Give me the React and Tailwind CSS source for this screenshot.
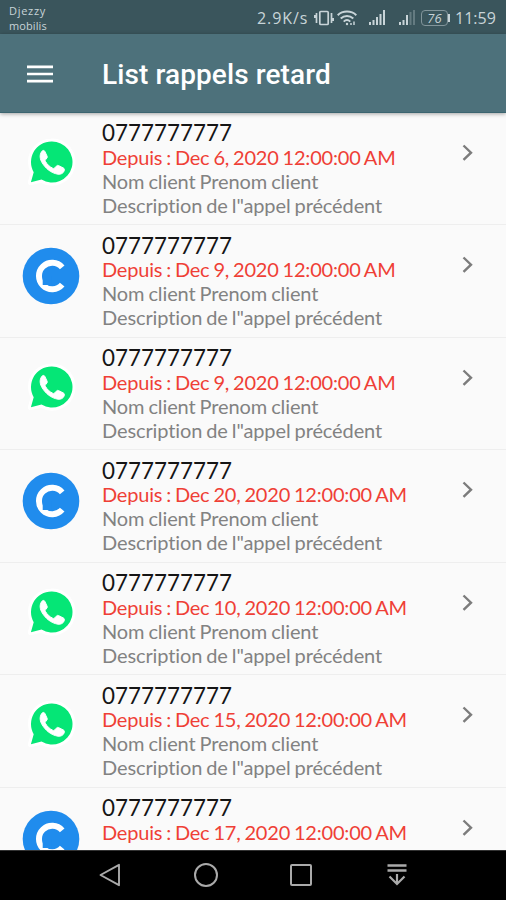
const calls = [
  { app: 'whatsapp', date: 'Dec 6, 2020 12:00:00 AM' },
  { app: 'phone', date: 'Dec 9, 2020 12:00:00 AM' },
  { app: 'whatsapp', date: 'Dec 9, 2020 12:00:00 AM' },
  { app: 'phone', date: 'Dec 20, 2020 12:00:00 AM' },
  { app: 'whatsapp', date: 'Dec 10, 2020 12:00:00 AM' },
  { app: 'whatsapp', date: 'Dec 15, 2020 12:00:00 AM' },
  { app: 'phone', date: 'Dec 17, 2020 12:00:00 AM' },
];

function WhatsappIcon() {
  return (
    <svg className="w-[58px] h-[58px] mt-[20px] mr-px" viewBox="0 0 58 58" fill="none">
      <path
        d="M29.4 8.5a20.5 20.5 0 0 0-17.7 30.7L8.9 49.2l10.6-2.6A20.5 20.5 0 1 0 29.4 8.5Z"
        fill="#05e676"
        stroke="#fff"
        strokeWidth="6"
        strokeLinejoin="round"
        paintOrder="stroke"
      />
      <path
        d="M20.4 17.8c-2.7 2.8-3 6.8-.8 11 3.5 6.5 9.4 11.2 16.2 12.4 3 .5 5.6-1 6.4-3.400.4-1.500.2-2.200-.8-2.800l-4.900-2.400c-1-.4-1.500-.2-2.200.6l-1.700 1.800c-.5.6-1 .6-1.900.2-3.200-1.500-5.600-3.800-7.300-6.900-.4-.8-.2-1.200.3-1.700l1.300-1.700c.4-.6.3-1.100.1-1.700l-2.200-4.700c-.5-1.100-1.600-1.400-2.500-.7Z"
        fill="#fff"
        stroke="#fff"
        strokeWidth="1"
      />
    </svg>
  );
}

function PhoneIcon() {
  return (
    <svg className="w-[58px] h-[58px] mt-[22px]" viewBox="0 0 58 58" fill="none">
      <circle cx="29" cy="29" r="28.3" fill="#208ced" />
      <path
        d="M40.2 20.4A13.2 13.2 0 1 0 40.2 37.600"
        stroke="#fff"
        strokeWidth="6"
      />
      <path d="M20.700 29h9v9h-9Z" fill="#208ced" />
    </svg>
  );
}

function StatusBar() {
  return (
    <div className="h-[34px] shrink-0 bg-[#3a555c] flex justify-between pl-[9px] pr-[10px] text-[#c8d4d8] font-['Open_Sans',sans-serif]">
      <div className="text-[11px] leading-[15px] pt-[3px] tracking-[0.7px]">
        <div>Djezzy</div>
        <div className="tracking-[0.1px]">mobilis</div>
      </div>
      <div className="flex items-center h-[36px]">
        <span className="text-[16px] tracking-[0.9px] font-medium w-[57px] mr-[2px] whitespace-nowrap">2.9K/s</span>
        <svg className="w-[20px] h-[18px] -ml-[2px]" viewBox="0 0 20 18" fill="none" stroke="currentColor" strokeWidth="1.700">
          <rect x="5.800" y="2.500" width="8.400" height="13" rx="1" />
          <path d="M2.500 4v10M17.500 4v10M.8 6v3M19.200 9v3" />
        </svg>
        <svg className="w-[20px] h-[18px] ml-[3px]" viewBox="0 0 20 18" fill="none" stroke="currentColor" strokeWidth="2">
          <path d="M.7 6.200c5-4.800 13.600-4.800 18.600 0M3.700 9.500c3.700-3.500 8.900-3.500 12.600 0M6.700 12.600c2-1.900 4.600-1.900 6.600 0" />
          <circle cx="10" cy="15" r="1.200" fill="currentColor" stroke="none" />
          <path d="M17 12.500v3.500M14 14v2" strokeWidth="1.500" />
        </svg>
        <svg className="w-[18px] h-[18px] ml-[11px]" viewBox="0 0 18 18" fill="none" stroke="currentColor" strokeWidth="2">
          <path d="M2 16v-3M5.500 16v-5M9 16V8M12.500 16V5M16 16V1" />
        </svg>
        <svg className="w-[18px] h-[18px] ml-[12px]" viewBox="0 0 18 18" fill="none" stroke="currentColor" strokeWidth="2">
          <path d="M2 16v-3M5.500 16v-5M9 16V6" />
          <path d="M12.500 16V3M16 16V1" opacity=".3" />
        </svg>
        <div className="ml-[5px] w-[27px] h-[16px] rounded-[4px] border border-[#82959b] text-[13px] leading-[14px] text-center italic font-medium">
          76
        </div>
        <div className="w-[2px] h-[8px] bg-[#c8d4d8] mr-[5px]" />
        <span className="text-[16px] font-medium w-[41px] whitespace-nowrap">11:59</span>
      </div>
    </div>
  );
}

function CallRow({ call }) {
  return (
    <div className="h-[112.5px] shrink-0 flex border-b border-[#eeeeee] font-['Lato',sans-serif]">
      <div className="w-[102px] shrink-0 flex items-start justify-center">
        {call.app === 'whatsapp' ? <WhatsappIcon /> : <PhoneIcon />}
      </div>
      <div className="flex-1 pt-[7.5px] text-[20px] leading-[24px] tracking-[-0.11px] [word-spacing:-1px] text-[#828282] whitespace-nowrap">
        <div className="text-[22.4px] leading-[26px] h-[24.5px] tracking-normal text-[#151515]">0777777777</div>
        <div className="tracking-[-0.2px] text-[#ef3f36]">Depuis : {call.date}</div>
        <div>Nom client Prenom client</div>
        <div>Description de l"appel précédent</div>
      </div>
      <svg className="w-[12px] h-[18px] mt-[31px] mr-[32px]" viewBox="0 0 12 18" fill="none" stroke="#7c7c7c" strokeWidth="2.4">
        <path d="M1.500 1.500l7.500 7.200-7.500 7.200" />
      </svg>
    </div>
  );
}

function NavBar() {
  return (
    <div className="h-[50px] shrink-0 bg-black border-t border-[#333] flex items-center justify-between pl-[98px] pr-[97px] pb-[2px] text-[#aaaaaa]">
      <svg className="w-6 h-6" viewBox="0 0 24 24" fill="none" stroke="currentColor" strokeWidth="1.900" strokeLinejoin="round">
        <path d="M21 1.800v20.400L2.500 12Z" />
      </svg>
      <svg className="w-6 h-6" viewBox="0 0 24 24" fill="none" stroke="currentColor" strokeWidth="2">
        <circle cx="12" cy="12" r="11" />
      </svg>
      <svg className="w-6 h-6" viewBox="0 0 24 24" fill="none" stroke="currentColor" strokeWidth="2">
        <rect x="2" y="2" width="20" height="20" rx="1" />
      </svg>
      <svg className="w-6 h-6" viewBox="0 0 24 24" fill="none" stroke="currentColor" strokeWidth="2.200">
        <path d="M2.500 2.500h19M2.500 7.500h19" strokeWidth="2.600" />
        <path d="M12 11v10M4.500 13.500L12 21l7.500-7.500" />
      </svg>
    </div>
  );
}

export default function App() {
  return (
    <div className="w-full h-[900px] flex flex-col overflow-hidden bg-[#fafafa]">
      <StatusBar />
      <header className="h-[78.5px] shrink-0 bg-[#4d717b] flex items-center pl-[27px] pt-[2px] border-b border-[#3c6570] shadow-[0_1px_4px_rgba(0,0,0,0.35)] z-10">
        <svg className="w-[26px] h-[18px] mr-[49px]" viewBox="0 0 26 18" stroke="#fff" strokeWidth="2.700">
          <path d="M0 1.800h26M0 9h26M0 16.200h26" />
        </svg>
        <h1 className="text-[28px] tracking-[0.1px] font-medium text-white whitespace-nowrap pt-[2px] font-['Roboto',sans-serif]">
          List rappels retard
        </h1>
      </header>
      <main className="flex-1 min-h-0 overflow-hidden flex flex-col">
        {calls.map((call, i) => (
          <CallRow key={i} call={call} />
        ))}
      </main>
      <NavBar />
    </div>
  );
}
